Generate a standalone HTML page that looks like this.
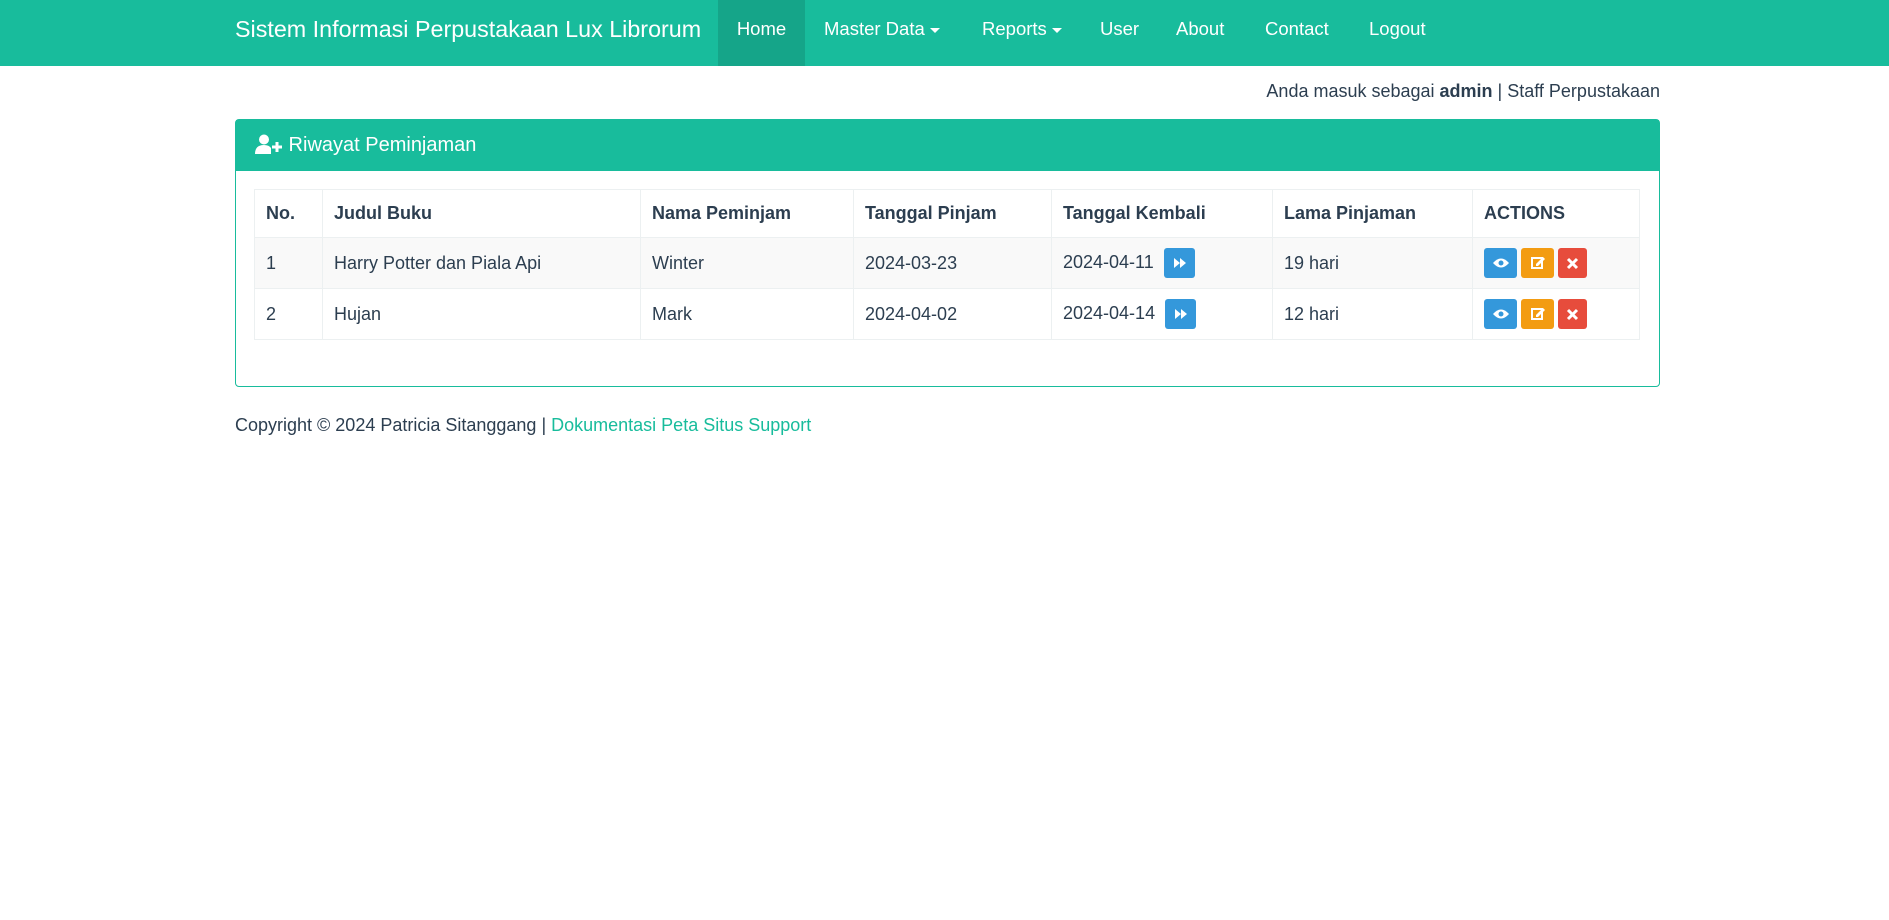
<!DOCTYPE html>
<html><head><meta charset="utf-8"><style>
*{box-sizing:border-box;margin:0;padding:0}
body{width:1889px;height:920px;background:#fff;font-family:"Liberation Sans",sans-serif;color:#2c3e50;font-size:18px;position:relative;overflow:hidden}
.nav{position:absolute;left:0;top:0;width:1889px;height:66px;background:#18bc9c}
.nav span{position:absolute;top:0;height:66px;line-height:58px;color:#fff;font-size:18.5px}
.brand{font-size:23.3px!important;left:235px}
.active{background:#15a589;}
.caret{display:inline-block;width:0;height:0;border-left:5px solid transparent;border-right:5px solid transparent;border-top:5px solid #fff;vertical-align:middle;margin-left:5px}
.abs{position:absolute}
.panel{position:absolute;left:235px;top:119px;width:1425px;height:268px;border:1px solid #18bc9c;border-radius:4px}
.ph{position:absolute;left:0;top:0;width:100%;height:51px;background:#18bc9c;color:#fff;font-size:20px;line-height:50px;padding-left:19px}
table{position:absolute;left:254px;top:189px;width:1386px;border-collapse:collapse}
td,th{border:1px solid #ecf0f1;padding:0 0 0 11px;text-align:left;font-size:18px;vertical-align:middle;white-space:nowrap}
th{height:48px;font-weight:bold}
td{height:51px}
tr.odd td{background:#f9f9f9}
.b{display:inline-block;width:31px;height:30px;border-radius:3px;vertical-align:middle;position:relative}
.blue{background:#3498db}.org{background:#f39c12}.red{background:#e74c3c}
.b svg{position:absolute;left:0;top:0}
.ff{margin-left:10px}
a{color:#18bc9c;text-decoration:none}
</style></head><body>
<div class="nav">
<span class="brand">Sistem Informasi Perpustakaan Lux Librorum</span>
<span class="active" style="left:718px;width:87px;text-align:center">Home</span>
<span style="left:824px">Master Data<i class="caret"></i></span>
<span style="left:982px">Reports<i class="caret"></i></span>
<span style="left:1100px">User</span>
<span style="left:1176px">About</span>
<span style="left:1265px">Contact</span>
<span style="left:1369px">Logout</span>
</div>
<div class="abs" style="right:229px;top:81px;font-size:18px">Anda masuk sebagai <b>admin</b> | Staff Perpustakaan</div>
<div class="panel"><div class="ph"><svg width="28" height="20" viewBox="0 0 28 20" style="vertical-align:-3px"><circle cx="9" cy="5.5" r="5" fill="#fff"/><path d="M0 20 Q0 11 9 11 Q14 11 16 14 L16 20Z" fill="#fff"/><path d="M17 13h10M22 8v10" stroke="#fff" stroke-width="3"/></svg> Riwayat Peminjaman</div></div>
<table>
<tr><th style="width:68px">No.</th><th style="width:318px">Judul Buku</th><th style="width:213px">Nama Peminjam</th><th style="width:198px">Tanggal Pinjam</th><th style="width:221px">Tanggal Kembali</th><th style="width:200px">Lama Pinjaman</th><th>ACTIONS</th></tr>
<tr class="odd"><td>1</td><td>Harry Potter dan Piala Api</td><td>Winter</td><td>2024-03-23</td><td>2024-04-11<span class="b blue ff"><svg width="31" height="30"><path d="M10 10l6 5-6 5zM16 10l6 5-6 5z" fill="#fff"/></svg></span></td><td>19 hari</td><td><span class="b blue" style="width:33px"><svg width="33" height="30"><path d="M9 15q8-9 16 0q-8 9-16 0z" fill="#fff"/><circle cx="17" cy="15" r="2.5" fill="#3498db"/></svg></span> <span class="b org" style="width:33px;margin-left:-1px"><svg width="33" height="30"><rect x="11" y="10" width="10" height="10" fill="none" stroke="#fff" stroke-width="2"/><path d="M15 16l7-7 2 2-7 7h-2z" fill="#fff"/></svg></span> <span class="b red" style="width:29px;margin-left:-1px"><svg width="29" height="30"><path d="M10 11l9 9M19 11l-9 9" stroke="#fff" stroke-width="3"/></svg></span></td></tr>
<tr><td>2</td><td>Hujan</td><td>Mark</td><td>2024-04-02</td><td>2024-04-14<span class="b blue ff"><svg width="31" height="30"><path d="M10 10l6 5-6 5zM16 10l6 5-6 5z" fill="#fff"/></svg></span></td><td>12 hari</td><td><span class="b blue" style="width:33px"><svg width="33" height="30"><path d="M9 15q8-9 16 0q-8 9-16 0z" fill="#fff"/><circle cx="17" cy="15" r="2.5" fill="#3498db"/></svg></span> <span class="b org" style="width:33px;margin-left:-1px"><svg width="33" height="30"><rect x="11" y="10" width="10" height="10" fill="none" stroke="#fff" stroke-width="2"/><path d="M15 16l7-7 2 2-7 7h-2z" fill="#fff"/></svg></span> <span class="b red" style="width:29px;margin-left:-1px"><svg width="29" height="30"><path d="M10 11l9 9M19 11l-9 9" stroke="#fff" stroke-width="3"/></svg></span></td></tr>
</table>
<div class="abs" style="left:235px;top:415px;font-size:18px">Copyright © 2024 Patricia Sitanggang | <a>Dokumentasi Peta Situs Support</a></div>
</body></html>
